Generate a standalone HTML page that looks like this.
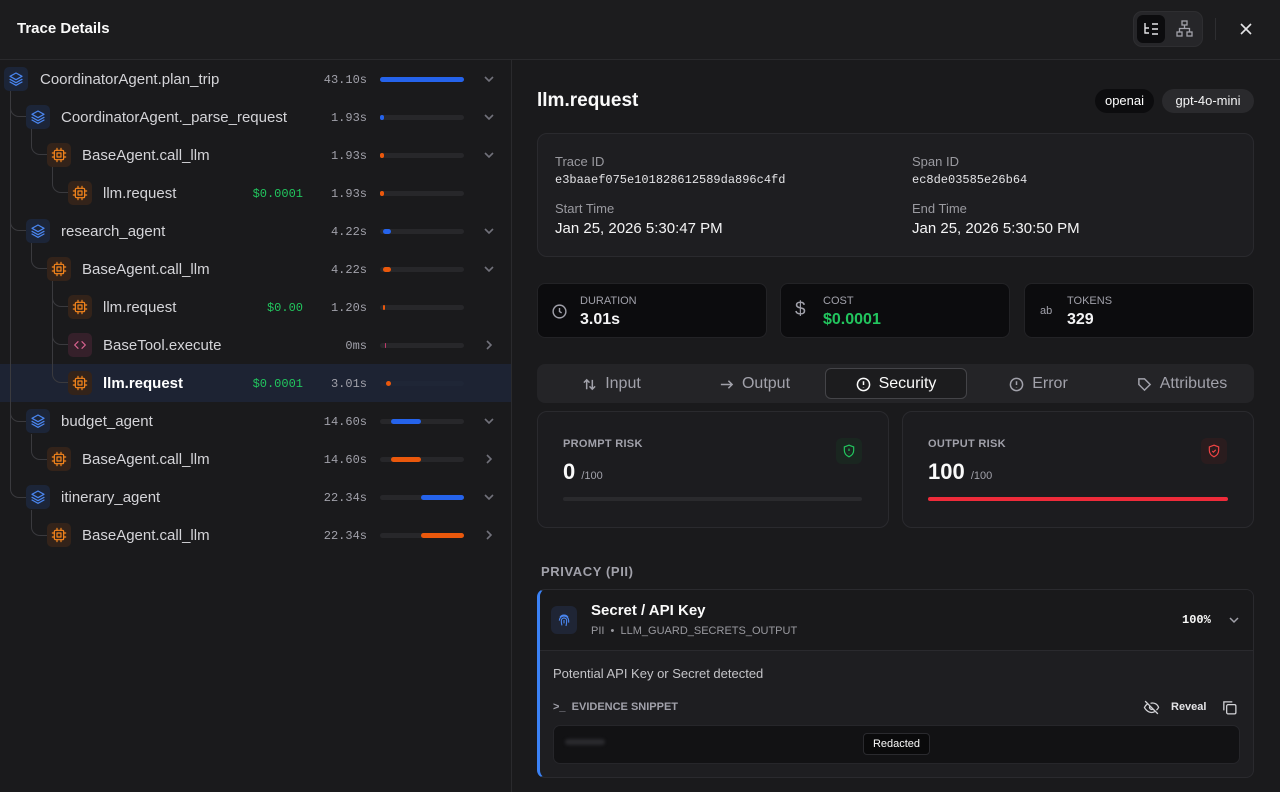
<!DOCTYPE html>
<html><head><meta charset="utf-8"><style>
*{box-sizing:border-box;margin:0;padding:0}
body{width:1280px;height:792px;background:#1a1a1c;font-family:"Liberation Sans",sans-serif;color:#e4e4e7;position:relative;overflow:hidden}
.a{position:absolute}
.mono{font-family:"Liberation Mono",monospace}
.hdr{left:0;top:0;width:1280px;height:60px;border-bottom:1px solid #2a2a2d;background:#1c1c1e}
.row{position:absolute;left:0;width:511px;height:38px}
.ic{position:absolute;top:7px;width:24px;height:24px;border-radius:5px;display:flex;align-items:center;justify-content:center}
.ic svg{width:16px;height:16px;fill:none;stroke-width:1.8;stroke-linecap:round;stroke-linejoin:round}
.lay{background:#1c2538}.lay svg{stroke:#4a86f0}
.chip{background:#33231a}.chip svg{stroke:#f7861c}
.code{background:#35202a}.code svg{stroke:#d9628f}
.nm{position:absolute;top:11px;font-size:15px;color:#d4d4d8;white-space:nowrap}
.cost{position:absolute;top:13px;right:208px;font-size:12px;color:#22c55e}
.tm{position:absolute;top:13px;right:144px;font-size:12px;color:#a1a1aa;text-align:right}
.track{position:absolute;left:380px;top:17px;width:84px;height:5px;border-radius:3px;background:#27272a}
.bar{position:absolute;top:0;height:5px;border-radius:3px}
.chev{position:absolute;left:483px;top:13px;width:12px;height:12px;stroke:#71717a;fill:none;stroke-width:1.6}
.elb{position:absolute;border-left:1px solid #3a3a3e;border-bottom:1px solid #3a3a3e;border-bottom-left-radius:9px}
.card{position:absolute;border:1px solid #2a2a2e;border-radius:10px}
.lbl{font-size:14px;color:#9a9aa0}
.stat{background:#0c0c0e;border:1px solid #232326;border-radius:8px;position:absolute;top:283px;height:55px}
.stat .k{position:absolute;left:42px;top:11px;font-size:11px;color:#a1a1aa}
.stat .v{position:absolute;left:42px;top:27px;font-size:16px;font-weight:bold;color:#f4f4f5}
.tab{position:absolute;top:4px;height:30px;font-size:16px;color:#a1a1aa;display:flex;align-items:center;justify-content:center;gap:8px}
.tab svg{width:15px;height:15px;stroke:#a1a1aa;fill:none;stroke-width:1.6}
</style></head><body>
<svg width="0" height="0" style="position:absolute">
<symbol id="layers" viewBox="0 0 24 24"><path d="M12 3 3 8l9 5 9-5z"/><path d="M3 12.5l9 5 9-5"/><path d="M3 16.5l9 5 9-5"/></symbol>
<symbol id="chipi" viewBox="0 0 24 24"><rect x="5" y="5" width="14" height="14" rx="2"/><rect x="9" y="9" width="6" height="6"/><path d="M9 2v3M15 2v3M9 19v3M15 19v3M2 9h3M2 15h3M19 9h3M19 15h3"/></symbol>
<symbol id="codei" viewBox="0 0 24 24"><path d="M9 7 4 12l5 5M15 7l5 5-5 5"/></symbol>
<symbol id="down" viewBox="0 0 12 12"><path d="M2 4l4 4 4-4"/></symbol>
<symbol id="right" viewBox="0 0 12 12"><path d="M4 2l4 4-4 4"/></symbol>
</svg>

<div class="a hdr"></div>
<div class="a" style="left:17px;top:20px;font-size:15px;font-weight:bold;color:#fafafa">Trace Details</div>
<div class="a" style="left:1133px;top:11px;width:70px;height:36px;border-radius:9px;background:#262629;border:1px solid #2e2e31"></div>
<div class="a" style="left:1137px;top:15px;width:28px;height:28px;border-radius:6px;background:#0c0c0e"></div>
<svg class="a" style="left:1143px;top:21px" width="16" height="16" viewBox="0 0 16 16" fill="none" stroke="#e4e4e7" stroke-width="1.4"><path d="M2 2v10h4M2 7h4M9 3h6M9 8h6M9 13h6"/></svg>
<svg class="a" style="left:1176px;top:20px" width="17" height="17" viewBox="0 0 17 17" fill="none" stroke="#a1a1aa" stroke-width="1.3"><rect x="6" y="1" width="5" height="4"/><rect x="1" y="12" width="5" height="4"/><rect x="11" y="12" width="5" height="4"/><path d="M8.5 5v3.5M3.5 12V8.5h10V12"/></svg>
<div class="a" style="left:1215px;top:18px;width:1px;height:22px;background:#2e2e31"></div>
<svg class="a" style="left:1239px;top:22px" width="14" height="14" viewBox="0 0 14 14" stroke="#e4e4e7" stroke-width="1.6"><path d="M2 2l10 10M12 2 2 12"/></svg>

<!-- left panel -->
<div class="a" style="left:511px;top:60px;width:1px;height:732px;background:#2a2a2d"></div>
<div class="a" style="left:0;top:364px;width:511px;height:38px;background:#1d2333"></div>

<div class="elb" style="left:10px;top:91px;width:16px;height:26px"></div>
<div class="elb" style="left:10px;top:91px;width:16px;height:140px"></div>
<div class="elb" style="left:10px;top:91px;width:16px;height:331px"></div>
<div class="elb" style="left:10px;top:91px;width:16px;height:407px"></div>
<div class="elb" style="left:31px;top:129px;width:16px;height:26px"></div>
<div class="elb" style="left:52px;top:167px;width:16px;height:26px"></div>
<div class="elb" style="left:31px;top:243px;width:16px;height:26px"></div>
<div class="elb" style="left:52px;top:281px;width:16px;height:26px"></div>
<div class="elb" style="left:52px;top:281px;width:16px;height:64px"></div>
<div class="elb" style="left:52px;top:281px;width:16px;height:102px"></div>
<div class="elb" style="left:31px;top:434px;width:16px;height:26px"></div>
<div class="elb" style="left:31px;top:510px;width:16px;height:26px"></div>

<div class="row" style="top:60px"><div class="ic lay" style="left:4px"><svg><use href="#layers"/></svg></div><div class="nm" style="left:40px">CoordinatorAgent.plan_trip</div><div class="tm mono">43.10s</div><div class="track"><div class="bar" style="left:0;width:84px;background:#2563eb"></div></div><svg class="chev"><use href="#down"/></svg></div>
<div class="row" style="top:98px"><div class="ic lay" style="left:26px"><svg><use href="#layers"/></svg></div><div class="nm" style="left:61px">CoordinatorAgent._parse_request</div><div class="tm mono">1.93s</div><div class="track"><div class="bar" style="left:0;width:4px;background:#2563eb"></div></div><svg class="chev"><use href="#down"/></svg></div>
<div class="row" style="top:136px"><div class="ic chip" style="left:47px"><svg><use href="#chipi"/></svg></div><div class="nm" style="left:82px">BaseAgent.call_llm</div><div class="tm mono">1.93s</div><div class="track"><div class="bar" style="left:0;width:4px;background:#ea580c"></div></div><svg class="chev"><use href="#down"/></svg></div>
<div class="row" style="top:174px"><div class="ic chip" style="left:68px"><svg><use href="#chipi"/></svg></div><div class="nm" style="left:103px">llm.request</div><div class="cost mono">$0.0001</div><div class="tm mono">1.93s</div><div class="track"><div class="bar" style="left:0;width:4px;background:#ea580c"></div></div></div>
<div class="row" style="top:212px"><div class="ic lay" style="left:26px"><svg><use href="#layers"/></svg></div><div class="nm" style="left:61px">research_agent</div><div class="tm mono">4.22s</div><div class="track"><div class="bar" style="left:3px;width:8px;background:#2563eb"></div></div><svg class="chev"><use href="#down"/></svg></div>
<div class="row" style="top:250px"><div class="ic chip" style="left:47px"><svg><use href="#chipi"/></svg></div><div class="nm" style="left:82px">BaseAgent.call_llm</div><div class="tm mono">4.22s</div><div class="track"><div class="bar" style="left:3px;width:8px;background:#ea580c"></div></div><svg class="chev"><use href="#down"/></svg></div>
<div class="row" style="top:288px"><div class="ic chip" style="left:68px"><svg><use href="#chipi"/></svg></div><div class="nm" style="left:103px">llm.request</div><div class="cost mono">$0.00</div><div class="tm mono">1.20s</div><div class="track"><div class="bar" style="left:3px;width:2px;background:#ea580c"></div></div></div>
<div class="row" style="top:326px"><div class="ic code" style="left:68px"><svg><use href="#codei"/></svg></div><div class="nm" style="left:103px">BaseTool.execute</div><div class="tm mono">0ms</div><div class="track"><div class="bar" style="left:5px;width:1px;background:#be3a6a"></div></div><svg class="chev"><use href="#right"/></svg></div>
<div class="row" style="top:364px"><div class="ic chip" style="left:68px"><svg><use href="#chipi"/></svg></div><div class="nm" style="left:103px;color:#fff;font-weight:bold">llm.request</div><div class="cost mono">$0.0001</div><div class="tm mono">3.01s</div><div class="track" style="background:#1f2636"><div class="bar" style="left:6px;width:5px;background:#ea580c"></div></div></div>
<div class="row" style="top:402px"><div class="ic lay" style="left:26px"><svg><use href="#layers"/></svg></div><div class="nm" style="left:61px">budget_agent</div><div class="tm mono">14.60s</div><div class="track"><div class="bar" style="left:11px;width:30px;background:#2563eb"></div></div><svg class="chev"><use href="#down"/></svg></div>
<div class="row" style="top:440px"><div class="ic chip" style="left:47px"><svg><use href="#chipi"/></svg></div><div class="nm" style="left:82px">BaseAgent.call_llm</div><div class="tm mono">14.60s</div><div class="track"><div class="bar" style="left:11px;width:30px;background:#ea580c"></div></div><svg class="chev"><use href="#right"/></svg></div>
<div class="row" style="top:478px"><div class="ic lay" style="left:26px"><svg><use href="#layers"/></svg></div><div class="nm" style="left:61px">itinerary_agent</div><div class="tm mono">22.34s</div><div class="track"><div class="bar" style="left:41px;width:43px;background:#2563eb"></div></div><svg class="chev"><use href="#down"/></svg></div>
<div class="row" style="top:516px"><div class="ic chip" style="left:47px"><svg><use href="#chipi"/></svg></div><div class="nm" style="left:82px">BaseAgent.call_llm</div><div class="tm mono">22.34s</div><div class="track"><div class="bar" style="left:41px;width:43px;background:#ea580c"></div></div><svg class="chev"><use href="#right"/></svg></div>

<!-- right panel -->
<div class="a" style="left:537px;top:90px;font-size:19px;font-weight:bold;color:#fafafa">llm.request</div>
<div class="a" style="left:1095px;top:89px;width:59px;height:24px;border-radius:12px;background:#0c0c0e;font-size:13px;color:#fff;text-align:center;line-height:24px">openai</div>
<div class="a" style="left:1162px;top:89px;width:92px;height:24px;border-radius:12px;background:#2a2a2d;font-size:13px;color:#f4f4f5;text-align:center;line-height:24px">gpt-4o-mini</div>

<div class="card" style="left:537px;top:133px;width:717px;height:124px;background:#1e1e21"></div>
<div class="a lbl" style="left:555px;top:154px;font-size:13px">Trace ID</div>
<div class="a mono" style="left:555px;top:173px;font-size:12px;color:#e4e4e7">e3baaef075e101828612589da896c4fd</div>
<div class="a lbl" style="left:912px;top:154px;font-size:13px">Span ID</div>
<div class="a mono" style="left:912px;top:173px;font-size:12px;color:#e4e4e7">ec8de03585e26b64</div>
<div class="a lbl" style="left:555px;top:201px;font-size:13px">Start Time</div>
<div class="a" style="left:555px;top:220px;font-size:15px;color:#f4f4f5">Jan 25, 2026 5:30:47 PM</div>
<div class="a lbl" style="left:912px;top:201px;font-size:13px">End Time</div>
<div class="a" style="left:912px;top:220px;font-size:15px;color:#f4f4f5">Jan 25, 2026 5:30:50 PM</div>

<div class="stat" style="left:537px;width:230px"><svg class="a" style="left:13px;top:19px" width="17" height="17" viewBox="0 0 24 24" fill="none" stroke="#a1a1aa" stroke-width="2"><circle cx="12" cy="12" r="9"/><path d="M12 7v5l3 2"/></svg><div class="k">DURATION</div><div class="v">3.01s</div></div>
<div class="stat" style="left:780px;width:230px"><div class="a" style="left:14px;top:15px;font-size:19px;color:#a1a1aa">$</div><div class="k">COST</div><div class="v" style="color:#22c55e">$0.0001</div></div>
<div class="stat" style="left:1024px;width:230px"><div class="a" style="left:15px;top:21px;font-size:11px;color:#a1a1aa">ab</div><div class="k">TOKENS</div><div class="v">329</div></div>

<div class="a" style="left:537px;top:364px;width:717px;height:39px;border-radius:8px;background:#242427"></div>
<div class="a" style="left:825px;top:368px;width:142px;height:31px;border-radius:6px;background:#1c1c1e;border:1px solid #444448"></div>
<div class="tab" style="left:540px;width:143px;top:369px"><svg viewBox="0 0 16 16"><path d="M5 13V3M2 6l3-3 3 3M11 3v10M8 10l3 3 3-3"/></svg>Input</div>
<div class="tab" style="left:683px;width:143px;top:369px"><svg viewBox="0 0 16 16"><path d="M2 8h12M10 4l4 4-4 4"/></svg>Output</div>
<div class="tab" style="left:825px;width:142px;top:369px;color:#fafafa"><svg viewBox="0 0 16 16" style="stroke:#fafafa"><circle cx="8" cy="8" r="6.5"/><path d="M8 4.5v4M8 11v.5"/></svg>Security</div>
<div class="tab" style="left:967px;width:143px;top:369px"><svg viewBox="0 0 16 16"><circle cx="8" cy="8" r="6.5"/><path d="M8 4.5v4M8 11v.5"/></svg>Error</div>
<div class="tab" style="left:1110px;width:144px;top:369px"><svg viewBox="0 0 16 16"><path d="M2 2h6l6 6-6 6-6-6z"/></svg>Attributes</div>

<div class="card" style="left:537px;top:411px;width:352px;height:117px;background:#1c1c1f"></div>
<div class="a" style="left:563px;top:438px;font-size:11px;font-weight:bold;color:#a1a1aa;letter-spacing:.3px">PROMPT RISK</div>
<div class="a" style="left:563px;top:459px;font-size:22px;font-weight:bold;color:#fafafa">0 <span style="font-size:11px;font-weight:normal;color:#a1a1aa">/100</span></div>
<div class="a" style="left:836px;top:438px;width:26px;height:26px;border-radius:6px;background:#1a2620"></div>
<svg class="a" style="left:842px;top:444px" width="14" height="14" viewBox="0 0 24 24" fill="none" stroke="#22c55e" stroke-width="2"><path d="M12 2 4 5v6c0 5 3.5 9 8 11 4.5-2 8-6 8-11V5z"/><path d="M12 8v4M12 16v.5"/></svg>
<div class="a" style="left:563px;top:497px;width:299px;height:4px;border-radius:2px;background:#2a2a2d"></div>

<div class="card" style="left:902px;top:411px;width:352px;height:117px;background:#1c1c1f"></div>
<div class="a" style="left:928px;top:438px;font-size:11px;font-weight:bold;color:#a1a1aa;letter-spacing:.3px">OUTPUT RISK</div>
<div class="a" style="left:928px;top:459px;font-size:22px;font-weight:bold;color:#fafafa">100 <span style="font-size:11px;font-weight:normal;color:#a1a1aa">/100</span></div>
<div class="a" style="left:1201px;top:438px;width:26px;height:26px;border-radius:6px;background:#2a1c1e"></div>
<svg class="a" style="left:1207px;top:444px" width="14" height="14" viewBox="0 0 24 24" fill="none" stroke="#ef4444" stroke-width="2"><path d="M12 2 4 5v6c0 5 3.5 9 8 11 4.5-2 8-6 8-11V5z"/><path d="M9 12l2 2 4-4"/></svg>
<div class="a" style="left:928px;top:497px;width:300px;height:4px;border-radius:2px;background:#ef2b3a"></div>

<div class="a" style="left:541px;top:564px;font-size:13px;font-weight:bold;color:#a1a1aa;letter-spacing:.6px">PRIVACY (PII)</div>

<div class="a" style="left:537px;top:589px;width:717px;height:189px;border-radius:8px;border:1px solid #2a2a2e;border-left:3px solid #3b82f6;background:#1e1e21;overflow:hidden">
  <div class="a" style="left:0;top:0;width:714px;height:61px;background:#19191b;border-bottom:1px solid #2a2a2e"></div>
</div>
<div class="a" style="left:551px;top:606px;width:26px;height:28px;border-radius:6px;background:#1f2535"></div>
<svg class="a" style="left:556px;top:612px" width="16" height="16" viewBox="0 0 24 24" fill="none" stroke="#4a86f0" stroke-width="1.7"><path d="M6 8a7 7 0 0 1 12 0M5 13c0-4 3-7 7-7s7 3 7 7v3M9 20c-1-2-1-4-1-7a4 4 0 0 1 8 0c0 3 0 5-1 8M12 12v5"/></svg>
<div class="a" style="left:591px;top:602px;font-size:15px;font-weight:bold;color:#fafafa">Secret / API Key</div>
<div class="a" style="left:591px;top:625px;font-size:11px;color:#9a9aa0">PII &nbsp;•&nbsp; LLM_GUARD_SECRETS_OUTPUT</div>
<div class="a mono" style="left:1182px;top:613px;font-size:12px;font-weight:bold;color:#fafafa">100%</div>
<svg class="a" style="left:1228px;top:614px;stroke:#a1a1aa;fill:none;stroke-width:1.5" width="12" height="12"><use href="#down"/></svg>
<div class="a" style="left:553px;top:666px;font-size:13px;color:#c4c4c8">Potential API Key or Secret detected</div>
<div class="a" style="left:553px;top:701px;font-size:11px;color:#a1a1aa;font-weight:bold">&gt;_ &nbsp;EVIDENCE SNIPPET</div>
<svg class="a" style="left:1143px;top:699px" width="17" height="17" viewBox="0 0 24 24" fill="none" stroke="#d4d4d8" stroke-width="1.8"><path d="M3 3l18 18M10.6 6.1A9 9 0 0 1 22 12a14 14 0 0 1-3 3.7M6.6 6.6A14 14 0 0 0 2 12s3.5 7 10 7a9 9 0 0 0 4.4-1.1M9.9 9.9a3 3 0 0 0 4.2 4.2"/></svg>
<div class="a" style="left:1171px;top:701px;font-size:11px;font-weight:bold;color:#e4e4e7">Reveal</div>
<svg class="a" style="left:1221px;top:699px" width="17" height="17" viewBox="0 0 24 24" fill="none" stroke="#d4d4d8" stroke-width="1.8"><rect x="8" y="8" width="13" height="13" rx="2"/><path d="M4 16V4h12"/></svg>
<div class="a" style="left:553px;top:725px;width:687px;height:39px;border-radius:7px;background:#121214;border:1px solid #26262a"></div>
<div class="a" style="left:565px;top:739px;width:40px;height:6px;border-radius:3px;background:#2a2a2e;filter:blur(1.5px)"></div>
<div class="a" style="left:863px;top:733px;width:67px;height:22px;border-radius:4px;background:#0a0a0b;border:1px solid #2a2a2e;font-size:11px;color:#fafafa;text-align:center;line-height:20px">Redacted</div>
</body></html>
